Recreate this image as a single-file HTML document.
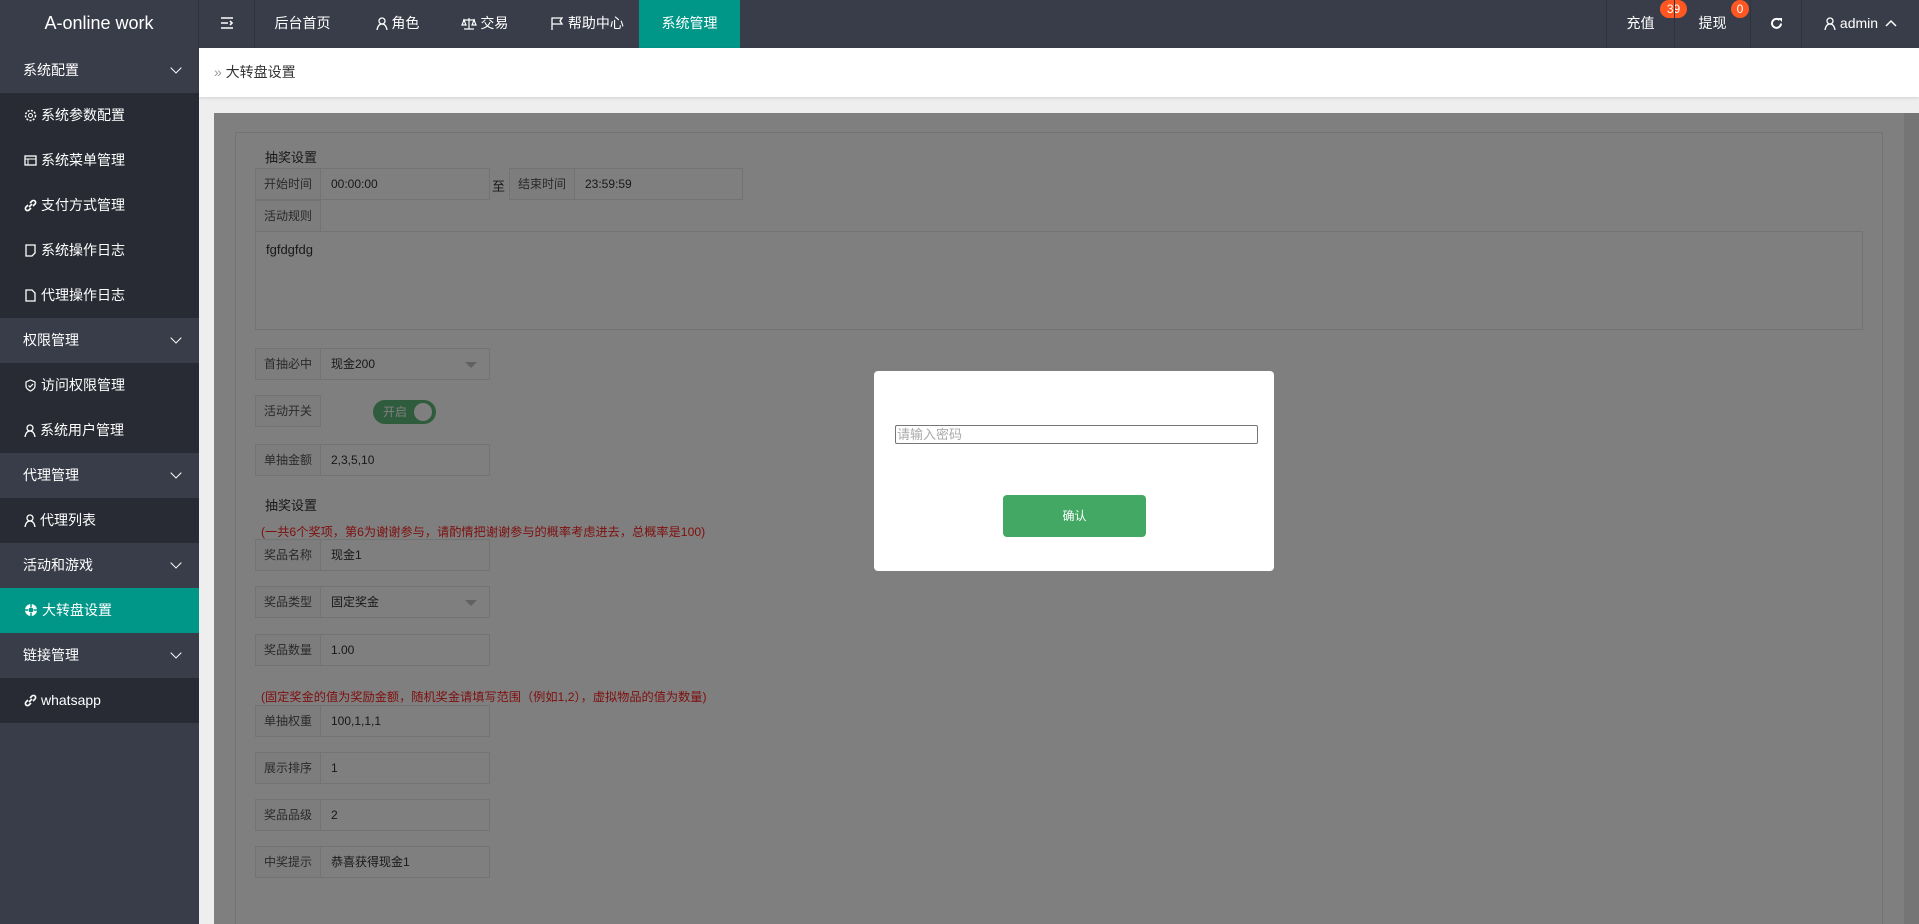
<!DOCTYPE html>
<html style="overflow:hidden;height:924px"><head><meta charset="utf-8"><style>
*{box-sizing:border-box;margin:0;padding:0}
body{width:1919px;height:924px;overflow:hidden;background:#eee;font-family:"Liberation Sans","Noto Sans CJK SC",sans-serif;position:relative}
.hd{position:absolute;left:0;top:0;width:1919px;height:48px;background:#393d49;color:#fff;font-size:14px}
.hd .logo{position:absolute;left:0;top:0;width:199px;height:48px;line-height:46px;text-align:center;font-size:18px;border-right:1px solid #2f333d}
.hd .it{position:absolute;top:0;height:48px;line-height:46px;text-align:center}
.bd{position:absolute;top:0;height:18px;min-width:18px;padding:0 5px;border-radius:9px;background:#ff5722;font-size:12px;line-height:18px;color:#fff;white-space:nowrap;text-align:center}
.side{position:absolute;left:0;top:48px;width:199px;height:876px;background:#393d49;color:#fff;font-size:14px}
.side div{height:45px;line-height:45px;position:relative}
.side .g{padding-left:23px;background:#393d49}
.side .g:after{content:"";position:absolute;right:19px;top:16px;width:7px;height:7px;border-right:1.5px solid #fff;border-bottom:1.5px solid #fff;transform:rotate(45deg)}
.side .i{background:#282b33;padding-left:24px}
.side .i svg{vertical-align:-2px;margin-right:4px}
.side .a{background:#009688}
.crumb{position:absolute;left:199px;top:48px;width:1720px;height:49px;background:#fff;box-shadow:0 1px 3px rgba(0,0,0,.12);font-size:14px;color:#333;line-height:49px;padding-left:15px}
.page{position:absolute;left:214px;top:113px;width:1690px;height:811px;background:#fff;font-size:12px;color:#333;overflow:hidden}
.sb{position:absolute;left:1904px;top:113px;width:15px;height:811px;background:#ebebeb}
.fs{position:absolute;left:21px;top:19px;width:1648px;height:820px;border:1px solid #e6e6e6}
.row{position:absolute;height:32px;display:flex}
.lb{width:66px;height:32px;border:1px solid #e6e6e6;background:#fafafa;line-height:30px;text-align:center;color:#555}
.in{height:32px;border:1px solid #e6e6e6;border-left:none;line-height:30px;padding-left:10px;position:relative}
.tri{position:absolute;right:12px;top:13px;border:6px solid transparent;border-top-color:#c2c2c2;border-bottom:none}
.t{position:absolute;font-size:13px;color:#333}
.red{position:absolute;color:#ff2020;font-size:12.2px}
.ov{position:absolute;left:214px;top:113px;width:1705px;height:811px;background:rgba(0,0,0,.5)}
.modal{position:absolute;left:874px;top:371px;width:400px;height:200px;background:#fff;border-radius:4px}
.modal .inp{position:absolute;left:21px;top:54px;width:363px;height:19px;border:1px solid #767676;border-radius:2px;font-size:13px;color:#aaa;line-height:17px;padding-left:1px}
.modal .btn{position:absolute;left:129px;top:124px;width:143px;height:42px;background:#42a863;border-radius:4px;color:#fff;font-size:12px;text-align:center;line-height:42px}
</style></head><body>
<div class="hd">
<div class="logo">A-online work</div>
<div class="it" style="left:199px;width:56px;border-right:1px solid #2f333d"><svg width="14" height="12" viewBox="0 0 14 12" style="vertical-align:-1px"><path d="M1 1h12M1 6h7M1 11h12M10 4l2 2-2 2" stroke="#fff" stroke-width="1.6" fill="none"/></svg></div>
<div class="it" style="left:255px;width:95px">后台首页</div>
<div class="it" style="left:355px;width:85px"><svg width="12" height="13" viewBox="0 0 12 13" style="vertical-align:-2px"><circle cx="6" cy="4" r="3" stroke="#fff" fill="none" stroke-width="1.3"/><path d="M1 13 Q2 7 6 7 Q10 7 11 13" stroke="#fff" fill="none" stroke-width="1.3"/></svg> 角色</div>
<div class="it" style="left:447px;width:75px"><svg width="16" height="13" viewBox="0 0 16 13" style="vertical-align:-2px"><path d="M8 1v11M3 12h10M2 3h12M3 3l-2 5h4zM13 3l-2 5h4z" stroke="#fff" fill="none" stroke-width="1.2"/></svg> 交易</div>
<div class="it" style="left:540px;width:95px"><svg width="13" height="13" viewBox="0 0 13 13" style="vertical-align:-2px"><path d="M1 13V1h10l-2 3 2 3H1" stroke="#fff" fill="none" stroke-width="1.3"/></svg> 帮助中心</div>
<div class="it" style="left:639px;width:101px;background:#009688">系统管理</div>
<div class="it" style="left:1606px;width:68px;border-left:1px solid #2f333d">充值<span class="bd" style="left:53px;width:27px">39</span></div>
<div class="it" style="left:1674px;width:76px;border-left:1px solid #2f333d">提现<span class="bd" style="left:56px">0</span></div>
<div class="it" style="left:1750px;width:52px;border-left:1px solid #2f333d;border-right:1px solid #2f333d"><svg width="13" height="13" viewBox="0 0 13 13" style="vertical-align:-2px"><path d="M11 6.5A4.5 4.5 0 1 1 9.5 3" stroke="#fff" fill="none" stroke-width="2"/><path d="M8 1h4v4z" fill="#fff"/></svg></div>
<div class="it" style="left:1802px;width:117px"><svg width="12" height="13" viewBox="0 0 12 13" style="vertical-align:-2px"><circle cx="6" cy="4" r="3" stroke="#fff" fill="none" stroke-width="1.3"/><path d="M1 13 Q2 7 6 7 Q10 7 11 13" stroke="#fff" fill="none" stroke-width="1.3"/></svg> admin <svg width="12" height="8" viewBox="0 0 12 8" style="vertical-align:1px;margin-left:3px"><path d="M1 7l5-5 5 5" stroke="#fff" fill="none" stroke-width="1.5"/></svg></div>
</div>
<div class="side">
<div class="g">系统配置</div>
<div class="i"><svg width="13" height="13" viewBox="0 0 13 13"><circle cx="6.5" cy="6.5" r="2" stroke="#fff" fill="none"/><circle cx="6.5" cy="6.5" r="5" stroke="#fff" fill="none" stroke-dasharray="2 1.4" stroke-width="1.5"/></svg>系统参数配置</div>
<div class="i"><svg width="13" height="13" viewBox="0 0 13 13"><rect x="1" y="2" width="11" height="9" stroke="#fff" fill="none" stroke-width="1.3"/><path d="M1 5h11M4 5v6" stroke="#fff"/></svg>系统菜单管理</div>
<div class="i"><svg width="13" height="13" viewBox="0 0 13 13"><path d="M5 8l3-3M4 6l-2 2a2 2 0 0 0 3 3l2-2M9 7l2-2a2 2 0 0 0-3-3L6 4" stroke="#fff" fill="none" stroke-width="1.6"/></svg>支付方式管理</div>
<div class="i"><svg width="13" height="13" viewBox="0 0 13 13"><path d="M2 1h9v8l-3 3H2z" stroke="#fff" fill="none" stroke-width="1.3"/></svg>系统操作日志</div>
<div class="i"><svg width="13" height="13" viewBox="0 0 13 13"><path d="M2 1h6l3 3v8H2z" stroke="#fff" fill="none" stroke-width="1.3"/></svg>代理操作日志</div>
<div class="g">权限管理</div>
<div class="i"><svg width="13" height="13" viewBox="0 0 13 13"><path d="M6.5 1L11 3v4c0 3-4.5 5-4.5 5S2 10 2 7V3z M4.5 6.5l1.5 1.5 3-3" stroke="#fff" fill="none" stroke-width="1.2"/></svg>访问权限管理</div>
<div class="i"><svg width="12" height="13" viewBox="0 0 12 13"><circle cx="6" cy="4" r="3" stroke="#fff" fill="none" stroke-width="1.3"/><path d="M1 13 Q2 7 6 7 Q10 7 11 13" stroke="#fff" fill="none" stroke-width="1.3"/></svg>系统用户管理</div>
<div class="g">代理管理</div>
<div class="i"><svg width="12" height="13" viewBox="0 0 12 13"><circle cx="6" cy="4" r="3" stroke="#fff" fill="none" stroke-width="1.3"/><path d="M1 13 Q2 7 6 7 Q10 7 11 13" stroke="#fff" fill="none" stroke-width="1.3"/></svg>代理列表</div>
<div class="g">活动和游戏</div>
<div class="i a"><svg width="14" height="14" viewBox="0 0 14 14"><circle cx="7" cy="7" r="6" fill="#fff"/><circle cx="7" cy="7" r="2.5" fill="#009688"/><path d="M7 1v3M7 10v3M1 7h3M10 7h3" stroke="#009688" stroke-width="1.5"/></svg>大转盘设置</div>
<div class="g">链接管理</div>
<div class="i"><svg width="13" height="13" viewBox="0 0 13 13"><path d="M5 8l3-3M4 6l-2 2a2 2 0 0 0 3 3l2-2M9 7l2-2a2 2 0 0 0-3-3L6 4" stroke="#fff" fill="none" stroke-width="1.6"/></svg>whatsapp</div>
</div>
<div class="crumb"><span style="color:#999">»</span> 大转盘设置</div>
<div class="page">
<div class="fs"></div>
<div class="t" style="left:51px;top:34px">抽奖设置</div>
<div class="row" style="left:41px;top:55px"><div class="lb">开始时间</div><div class="in" style="width:169px">00:00:00</div></div>
<div class="t" style="left:278px;top:63px">至</div>
<div class="row" style="left:295px;top:55px"><div class="lb">结束时间</div><div class="in" style="width:168px">23:59:59</div></div>
<div class="row" style="left:41px;top:87px"><div class="lb">活动规则</div></div>
<div style="position:absolute;left:41px;top:118px;width:1608px;height:99px;border:1px solid #e6e6e6;padding:10px;font-size:13px">fgfdgfdg</div>
<div class="row" style="left:41px;top:235px"><div class="lb">首抽必中</div><div class="in" style="width:169px">现金200<span class="tri"></span></div></div>
<div class="row" style="left:41px;top:282px"><div class="lb">活动开关</div></div>
<div style="position:absolute;left:159px;top:287px;width:63px;height:24px;border-radius:12px;background:#5fb878;color:#fff;font-size:12px;line-height:24px;padding-left:10px">开启<span style="position:absolute;right:4px;top:3px;width:18px;height:18px;border-radius:50%;background:#fff"></span></div>
<div class="row" style="left:41px;top:331px"><div class="lb">单抽金额</div><div class="in" style="width:169px">2,3,5,10</div></div>
<div class="t" style="left:51px;top:382px">抽奖设置</div>
<div class="red" style="left:47px;top:409px">(一共6个奖项，第6为谢谢参与，请酌情把谢谢参与的概率考虑进去，总概率是100)</div>
<div class="row" style="left:41px;top:426px"><div class="lb">奖品名称</div><div class="in" style="width:169px">现金1</div></div>
<div class="row" style="left:41px;top:473px"><div class="lb">奖品类型</div><div class="in" style="width:169px">固定奖金<span class="tri"></span></div></div>
<div class="row" style="left:41px;top:521px"><div class="lb">奖品数量</div><div class="in" style="width:169px">1.00</div></div>
<div class="red" style="left:47px;top:574px">(固定奖金的值为奖励金额，随机奖金请填写范围（例如1,2），虚拟物品的值为数量)</div>
<div class="row" style="left:41px;top:592px"><div class="lb">单抽权重</div><div class="in" style="width:169px">100,1,1,1</div></div>
<div class="row" style="left:41px;top:639px"><div class="lb">展示排序</div><div class="in" style="width:169px">1</div></div>
<div class="row" style="left:41px;top:686px"><div class="lb">奖品品级</div><div class="in" style="width:169px">2</div></div>
<div class="row" style="left:41px;top:733px"><div class="lb">中奖提示</div><div class="in" style="width:169px">恭喜获得现金1</div></div>
</div>
<div class="sb"></div>
<div class="ov"></div>
<div class="modal"><div class="inp">请输入密码</div><div class="btn">确认</div></div>
</body></html>
